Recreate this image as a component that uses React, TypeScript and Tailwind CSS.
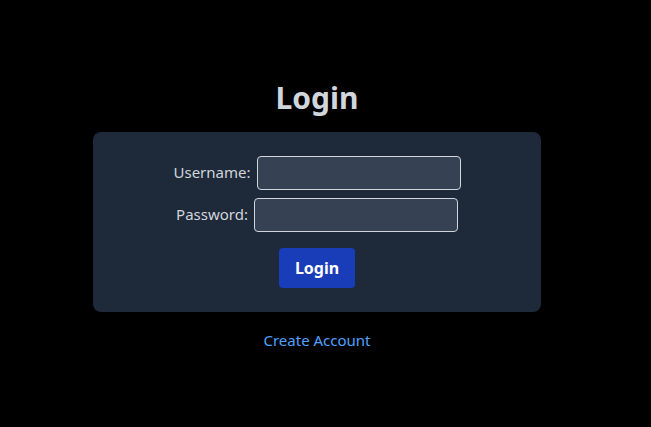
export default function App() {
	return (
		<div
			className="flex min-h-screen flex-col items-center justify-center bg-black pt-[4px] pr-[17px]"
			style={{ fontFamily: '"Segoe UI", "Noto Sans", "Open Sans", sans-serif' }}
		>
			<h1 className="mb-4 text-3xl font-bold text-gray-300">Login</h1>
			<form className="flex w-[448px] flex-col items-center rounded-lg bg-gray-800 p-6">
				<div className="mb-2 flex items-center gap-[6px]">
					<label className="text-[15px] text-gray-300">Username:</label>
					<input
						type="text"
						className="h-[34px] w-[204px] rounded border border-gray-300 bg-gray-700 px-2 text-gray-100 outline-none"
					/>
				</div>
				<div className="flex items-center gap-[6px]">
					<label className="text-[15px] text-gray-300">Password:</label>
					<input
						type="password"
						className="h-[34px] w-[204px] rounded border border-gray-300 bg-gray-700 px-2 text-gray-100 outline-none"
					/>
				</div>
				<button
					type="button"
					className="mt-4 rounded bg-blue-800 px-4 py-2 font-bold text-white"
				>
					Login
				</button>
			</form>
			<a href="#" className="mt-4 text-[15px] leading-6 text-blue-400">
				Create Account
			</a>
		</div>
	);
}
